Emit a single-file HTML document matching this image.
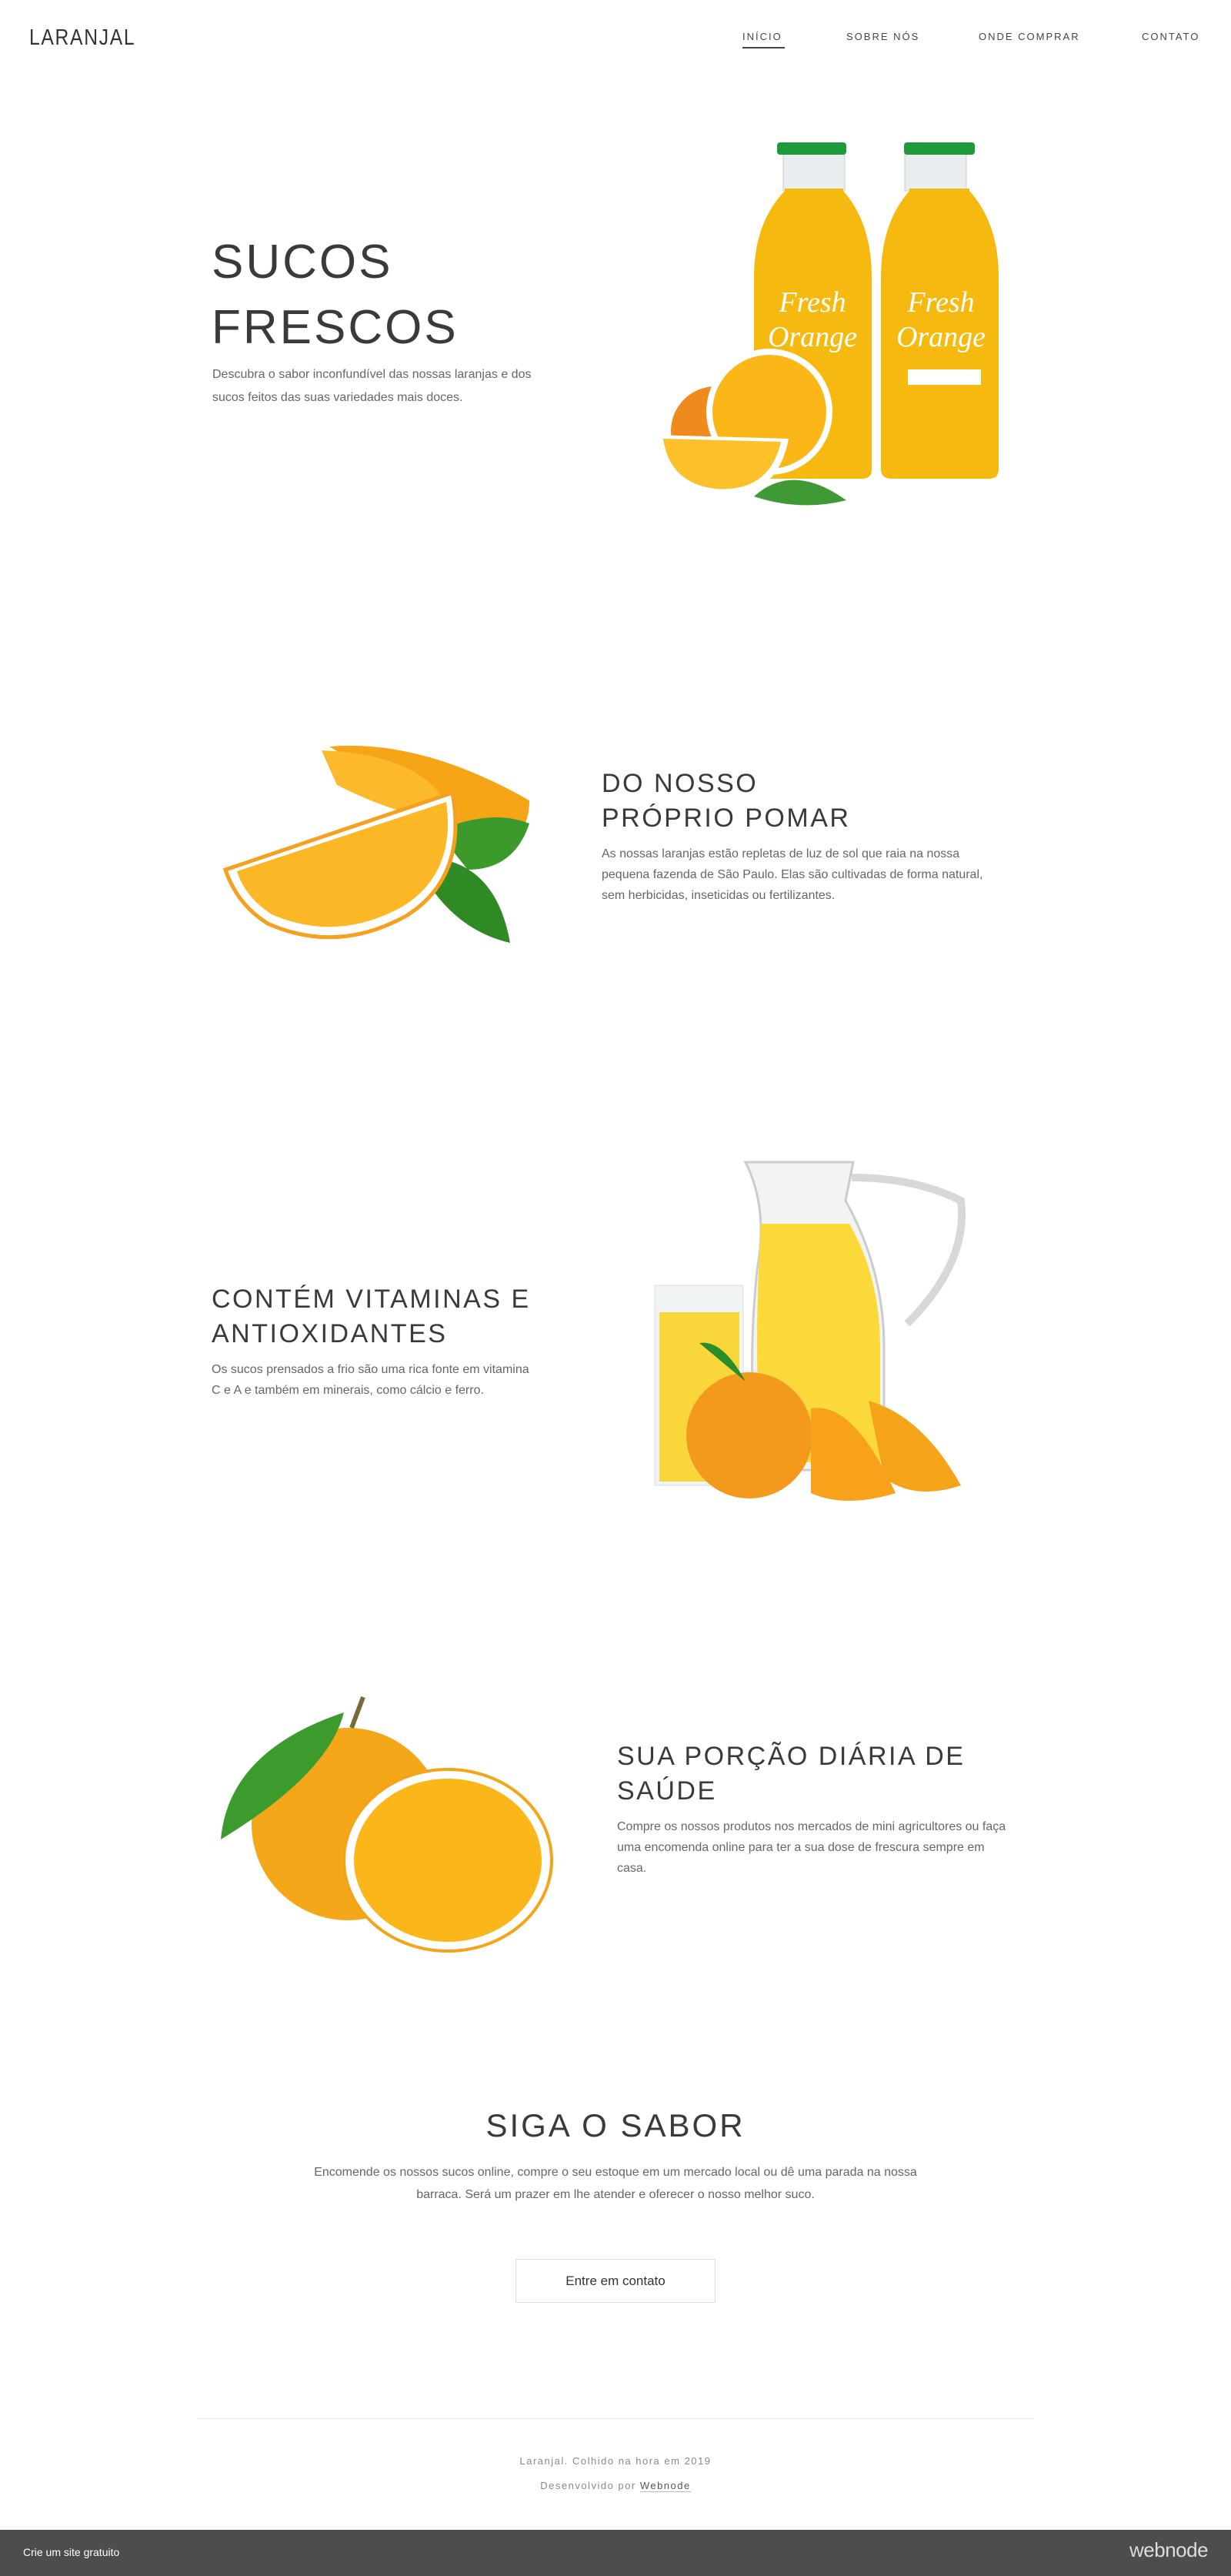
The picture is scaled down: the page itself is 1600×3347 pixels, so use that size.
<!DOCTYPE html>
<html><head><meta charset="utf-8">
<style>
*{margin:0;padding:0;box-sizing:border-box}
html,body{width:1600px;height:3347px;background:#fff;overflow:hidden}
body{position:relative;font-family:"Liberation Sans",sans-serif;color:#333}
.abs{position:absolute}
.logo{left:38px;top:33px;font-size:29px;letter-spacing:2px;font-weight:300;color:#333;transform:scaleX(0.85);transform-origin:left}
.nav{top:40px;font-size:13px;letter-spacing:2px;color:#444}
.h{font-weight:normal;color:#3a3a3a;letter-spacing:2.5px;text-transform:uppercase}
.p{font-size:16px;line-height:27px;color:#666}
svg{position:absolute}
</style></head><body>
<div class="abs logo">LARANJAL</div>
<div class="abs nav" style="left:965px">INÍCIO</div>
<div class="abs" style="left:965px;top:61px;width:55px;height:2px;background:#444"></div>
<div class="abs nav" style="left:1100px">SOBRE NÓS</div>
<div class="abs nav" style="left:1272px">ONDE COMPRAR</div>
<div class="abs nav" style="left:1484px">CONTATO</div>

<div class="abs h" style="left:275px;top:298px;font-size:62px;line-height:85px;letter-spacing:3px">SUCOS<br>FRESCOS</div>
<div class="abs p" style="left:276px;top:472px;width:520px;font-size:16px;line-height:30px">Descubra o sabor inconfundível das nossas laranjas e dos<br>sucos feitos das suas variedades mais doces.</div>

<svg style="left:820px;top:160px" width="500" height="580" viewBox="0 0 500 580">
 <g>
  <rect x="198" y="38" width="80" height="50" fill="#e8eef0" stroke="#ccc"/>
  <rect x="190" y="25" width="90" height="16" rx="4" fill="#1f9a3a"/>
  <path d="M200 85 L200 88 Q160 130 160 200 L160 450 Q160 462 175 462 L300 462 Q313 462 313 450 L313 200 Q313 130 276 88 L276 85Z" fill="#f6b90f"/>
  <rect x="356" y="38" width="80" height="50" fill="#e8eef0" stroke="#ccc"/>
  <rect x="355" y="25" width="92" height="16" rx="4" fill="#1f9a3a"/>
  <path d="M362 85 L362 88 Q325 130 325 200 L325 450 Q325 462 340 462 L465 462 Q478 462 478 450 L478 200 Q478 130 440 88 L440 85Z" fill="#f6b90f"/>
  <text x="236" y="245" fill="#fff" font-size="38" font-style="italic" text-anchor="middle" font-family="Liberation Serif">Fresh</text>
  <text x="236" y="290" fill="#fff" font-size="38" font-style="italic" text-anchor="middle" font-family="Liberation Serif">Orange</text>
  <text x="403" y="245" fill="#fff" font-size="38" font-style="italic" text-anchor="middle" font-family="Liberation Serif">Fresh</text>
  <text x="403" y="290" fill="#fff" font-size="38" font-style="italic" text-anchor="middle" font-family="Liberation Serif">Orange</text>
  <rect x="360" y="320" width="95" height="20" fill="#fff"/>
  <circle cx="110" cy="400" r="58" fill="#ef8a1c"/>
  <circle cx="180" cy="375" r="82" fill="#fff"/>
  <circle cx="180" cy="375" r="74" fill="#fbb718"/>
  <path d="M32 405 L205 410 Q190 490 110 485 Q40 475 32 405Z" fill="#fff"/>
  <path d="M42 410 L195 414 Q180 480 110 475 Q50 468 42 410Z" fill="#fbc02a"/>
  <path d="M160 485 Q210 440 280 490 Q220 505 160 485Z" fill="#3f9a35"/>
 </g>
</svg>

<svg style="left:288px;top:960px" width="410" height="280" viewBox="0 0 410 280">
 <path d="M140 10 Q260 0 400 80 Q400 140 340 130 Z" fill="#f5a516"/>
 <path d="M130 15 Q270 20 300 100 Q250 110 150 60Z" fill="#fbb92b"/>
 <path d="M280 120 Q350 90 400 110 Q380 170 320 170Z" fill="#3c9a2a"/>
 <path d="M300 160 Q360 180 375 265 Q310 250 270 190Z" fill="#2f8a25"/>
 <path d="M5 170 L300 70 Q320 180 240 230 Q150 280 60 240 Q20 215 5 170Z" fill="#fff" stroke="#f6a020" stroke-width="5"/>
 <path d="M20 172 L292 82 Q305 175 235 218 Q150 265 65 228 Q30 205 20 172Z" fill="#fbb726"/>
</svg>

<div class="abs h" style="left:782px;top:996px;font-size:34px;line-height:45px">DO NOSSO<br>PRÓPRIO POMAR</div>
<div class="abs p" style="left:782px;top:1096px;width:525px">As nossas laranjas estão repletas de luz de sol que raia na nossa pequena fazenda de São Paulo. Elas são cultivadas de forma natural, sem herbicidas, inseticidas ou fertilizantes.</div>

<div class="abs h" style="left:275px;top:1666px;font-size:34px;line-height:45px">CONTÉM VITAMINAS E<br>ANTIOXIDANTES</div>
<div class="abs p" style="left:275px;top:1766px;width:420px">Os sucos prensados a frio são uma rica fonte em vitamina C e A e também em minerais, como cálcio e ferro.</div>

<svg style="left:849px;top:1500px" width="420" height="460" viewBox="0 0 420 460">
 <rect x="2" y="170" width="115" height="260" fill="#f0f4f4" stroke="#ddd"/>
 <rect x="8" y="205" width="104" height="220" fill="#f9d63a"/>
 <path d="M120 10 L260 10 L250 60 Q300 150 300 250 L300 410 L140 410 Q120 300 135 150 Q150 70 120 10Z" fill="#f2f4f2" stroke="#ccc" stroke-width="3"/>
 <path d="M140 90 L255 90 Q295 160 295 250 L295 400 L145 400 Q128 300 140 90Z" fill="#fbd93a"/>
 <path d="M258 30 Q340 30 400 60 Q410 140 330 220" fill="none" stroke="#d6d9d6" stroke-width="10"/>
 <circle cx="125" cy="365" r="82" fill="#f39a1c"/>
 <path d="M120 295 Q90 240 60 245 Q90 270 120 295Z" fill="#2a8c2a"/>
 <path d="M205 330 Q260 320 315 440 Q250 460 205 440 Z" fill="#f7a21a"/>
 <path d="M280 320 Q350 340 400 430 Q340 450 300 420Z" fill="#f5a41a"/>
</svg>

<svg style="left:277px;top:2195px" width="460" height="350" viewBox="0 0 460 350">
 <circle cx="175" cy="175" r="125" fill="#f5a71a"/>
 <path d="M10 195 Q20 80 170 30 Q150 110 10 195Z" fill="#3b9b2c"/>
 <path d="M180 50 L195 10" stroke="#7a6a3a" stroke-width="6"/>
 <ellipse cx="305" cy="222" rx="135" ry="118" fill="#fff" stroke="#f4a41a" stroke-width="4"/>
 <ellipse cx="305" cy="222" rx="122" ry="106" fill="#fbb61a"/>
</svg>

<div class="abs h" style="left:802px;top:2260px;font-size:34px;line-height:45px">SUA PORÇÃO DIÁRIA DE<br>SAÚDE</div>
<div class="abs p" style="left:802px;top:2360px;width:520px">Compre os nossos produtos nos mercados de mini agricultores ou faça uma encomenda online para ter a sua dose de frescura sempre em casa.</div>

<div class="abs h" style="left:0;width:1600px;top:2738px;text-align:center;font-size:42px;letter-spacing:3px">SIGA O SABOR</div>
<div class="abs p" style="left:380px;width:840px;top:2808px;text-align:center;font-size:16px;line-height:29px">Encomende os nossos sucos online, compre o seu estoque em um mercado local ou dê uma parada na nossa<br>barraca. Será um prazer em lhe atender e oferecer o nosso melhor suco.</div>
<div class="abs" style="left:670px;top:2935px;width:260px;height:57px;border:1px solid #ddd;text-align:center;line-height:55px;font-size:17px;color:#333">Entre em contato</div>

<div class="abs" style="left:256px;top:3142px;width:1088px;height:1px;background:#e6e6e6"></div>
<div class="abs" style="left:0;width:1600px;top:3190px;text-align:center;font-size:13px;letter-spacing:1.5px;color:#888">Laranjal. Colhido na hora em 2019</div>
<div class="abs" style="left:0;width:1600px;top:3222px;text-align:center;font-size:13px;letter-spacing:1.5px;color:#888">Desenvolvido por <span style="color:#555;border-bottom:1px solid #bbb">Webnode</span></div>

<div class="abs" style="left:0;top:3287px;width:1600px;height:60px;background:#4d4d4d"></div>
<div class="abs" style="left:30px;top:3308px;font-size:14px;color:#fff">Crie um site gratuito</div>
<div class="abs" style="left:1468px;top:3298px;font-size:26px;color:#ddd;letter-spacing:-0.5px">webnode</div>
</body></html>
